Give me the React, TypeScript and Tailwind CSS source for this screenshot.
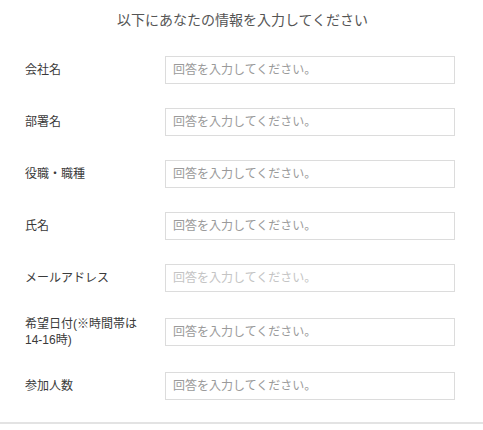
export default function App() {
  const fields = [
    { id: 1, label: "会社名" },
    { id: 2, label: "部署名" },
    { id: 3, label: "役職・職種" },
    { id: 4, label: "氏名" },
    { id: 5, label: "メールアドレス", light: true },
    { id: 6, label: "希望日付(※時間帯は14-16時)" },
    { id: 7, label: "参加人数" },
  ];

  return (
    <div
      className="w-[483px] h-[430px] bg-white"
      style={{ fontFamily: '"Liberation Sans", "Noto Sans CJK JP", sans-serif' }}
    >
      <div className="border-b-2 border-[#e3e3e3] pt-[10px] pb-[22px]">
        {/* Title */}
        <h2 className="text-center text-[14px] leading-[20px] text-[#555] pl-[2px]">
          以下にあなたの情報を入力してください
        </h2>

        {/* Form rows */}
        <div className="mt-[26px] flex flex-col gap-[24px] pl-[25px]">
          {fields.map((f) => (
            <div key={f.id} className="flex items-center">
              <label className="w-[124px] mr-[16px] text-[12px] leading-[16px] text-[#3a3a3a]">
                {f.label}
              </label>
              <input
                type="text"
                placeholder="回答を入力してください。"
                className={`w-[290px] h-[28px] border border-[#dcdcdc] px-[7px] text-[12px] outline-none ${
                  f.light ? "placeholder:text-[#c4c4c4]" : "placeholder:text-[#9a9a9a]"
                }`}
              />
            </div>
          ))}
        </div>
      </div>
    </div>
  );
}
